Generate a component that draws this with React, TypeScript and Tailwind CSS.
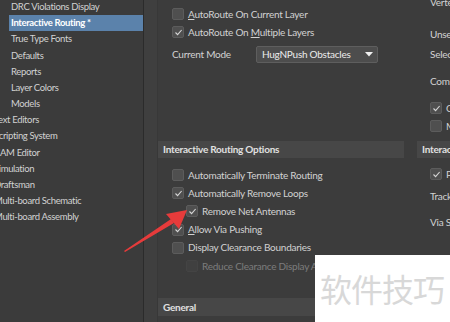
const SIDEBAR = [
  { label: "DRC Violations Display", child: true },
  { label: "Interactive Routing *", child: true, active: true },
  { label: "True Type Fonts", child: true },
  { label: "Defaults", child: true },
  { label: "Reports", child: true },
  { label: "Layer Colors", child: true },
  { label: "Models", child: true },
  { label: "Text Editors" },
  { label: "Scripting System" },
  { label: "CAM Editor" },
  { label: "Simulation" },
  { label: "Draftsman" },
  { label: "Multi-board Schematic" },
  { label: "Multi-board Assembly" },
];

function Check({ on, dim }: { on?: boolean; dim?: boolean }) {
  return (
    <span
      className={`size-[12px] shrink-0 rounded-[2px] grid place-items-center ${
        dim ? "bg-[#404040] border border-[#444]" : "bg-[#4f4f4f] border border-[#5c5c5c]"
      }`}
    >
      {on && (
        <svg width="9" height="9" viewBox="0 0 9 9">
          <path d="M1.5 4.5 L3.6 6.6 L7.6 2" fill="none" stroke="#d6d6d6" strokeWidth="1.1" />
        </svg>
      )}
    </span>
  );
}

function Row({ on, children, indent, dim }: { on?: boolean; children: React.ReactNode; indent?: boolean; dim?: boolean }) {
  return (
    <div className={`flex items-center gap-[4px] h-[18.2px] ${indent ? "pl-[28px]" : "pl-[14px]"}`}>
      <Check on={on} dim={dim} />
      <span className={dim ? "text-[#7c7c7c]" : "text-[#d2d2d2]"}>{children}</span>
    </div>
  );
}

export default function App() {
  return (
    <div
      className="relative w-[450px] h-[322px] overflow-hidden bg-[#3c3c3c] text-[10px] tracking-[-0.25px] text-[#d2d2d2] flex"
      style={{ fontFamily: "Lato, 'Noto Sans', sans-serif" }}
    >
      {/* tree */}
      <div className="w-[143px] shrink-0 bg-[#3b3b3b] -mt-[1px] text-[9.5px] tracking-[-0.35px]">
        {SIDEBAR.map((item) => (
          <div
            key={item.label}
            className={`h-[16.2px] flex items-center whitespace-nowrap ${
              item.child ? "ml-[9px] pl-[2px]" : "-ml-[6px]"
            } ${item.active ? "bg-[#5b82ab] text-white font-bold" : ""}`}
          >
            {item.label}
          </div>
        ))}
      </div>
      <div className="w-px shrink-0 bg-[#2b2b2b]" />
      <div className="w-[14px] shrink-0 bg-[#3f3f3f] border-r border-[#383838]" />

      {/* settings */}
      <div className="flex gap-[13px] whitespace-nowrap">
        <div className="w-[246px] shrink-0 flex flex-col">
          <div className="h-[141px] pt-[5px]">
            <Row>
              <span>
                <u>A</u>utoRoute On Current Layer
              </span>
            </Row>
            <Row on>
              <span>
                AutoRoute On <u>M</u>ultiple Layers
              </span>
            </Row>
            <div className="flex items-center pl-[14px] mt-[4px] h-[18px]">
              <span className="w-[84px]">Current Mode</span>
              <div className="w-[122px] h-[17px] rounded-[2px] border border-[#5e5e5e] bg-[#4d4d4d] flex items-center justify-between pl-[5px] pr-[4px] text-[#ececec]">
                <span>HugNPush Obstacles</span>
                <svg width="8" height="5" viewBox="0 0 8 5">
                  <path d="M0 0 H8 L4 4.5 Z" fill="#f0f0f0" />
                </svg>
              </div>
            </div>
          </div>
          <div className="h-[17px] bg-[#474747] flex items-center pl-[5px] font-bold text-[#e0e0e0]">
            Interactive Routing Options
          </div>
          <div className="pt-[8px]">
            <Row>Automatically Terminate Routing</Row>
            <Row on>Automatically Remove Loops</Row>
            <Row on indent>
              Remove Net Antennas
            </Row>
            <Row on>
              <span>
                <u>A</u>llow Via Pushing
              </span>
            </Row>
            <Row>Display Clearance Boundaries</Row>
            <Row indent dim>
              Reduce Clearance Display Area
            </Row>
          </div>
          <div className="mt-[23px] h-[18px] bg-[#474747] flex items-center pl-[5px] font-bold text-[#e0e0e0]">
            General
          </div>
        </div>

        <div className="w-[120px] shrink-0 flex flex-col">
          <div className="h-[148px] pl-[13px] -mt-[7px]">
            <div className="h-[18px] flex items-center">Vertex Action</div>
            <div className="h-[20px] mt-[13px] flex items-center">Unselected via/track</div>
            <div className="h-[20px] flex items-center">Selected via/track</div>
            <div className="h-[20px] mt-[7px] flex items-center">Component pushing</div>
            <div className="h-[18px] mt-[8px] flex items-center gap-[4px]">
              <Check on />
              Component re-route
            </div>
            <div className="h-[18px] flex items-center gap-[4px]">
              <Check />
              Move component
            </div>
          </div>
          <div className="h-[17px] bg-[#474747] flex items-center pl-[5px] font-bold text-[#e0e0e0]">
            Interactive Routing Width Sources
          </div>
          <div className="pl-[13px] pt-[7px]">
            <div className="h-[18px] flex items-center gap-[4px]">
              <Check on />
              Pickup Track Width From Existing Routes
            </div>
            <div className="h-[20px] mt-[3px] flex items-center">Track Width Mode</div>
            <div className="h-[20px] mt-[6px] flex items-center">Via Size Mode</div>
          </div>
        </div>
      </div>

      {/* watermark */}
      <div className="absolute left-[315px] top-[255px] w-[135px] h-[67px] bg-white flex items-start pl-[5px] pt-[17px]">
        <span
          className="text-[32px] leading-none text-[#d8d8d8] tracking-[-1px]"
          style={{ fontFamily: "'Noto Sans CJK SC', sans-serif" }}
        >
          软件技巧
        </span>
      </div>

      {/* annotation arrow */}
      <svg className="absolute left-0 top-0 pointer-events-none" width="450" height="322">
        <polygon points="124,251 171,219 174,223 125,252" fill="#e63b3b" />
        <polygon points="187,210 166,214 179,229" fill="#e63b3b" />
      </svg>
    </div>
  );
}
